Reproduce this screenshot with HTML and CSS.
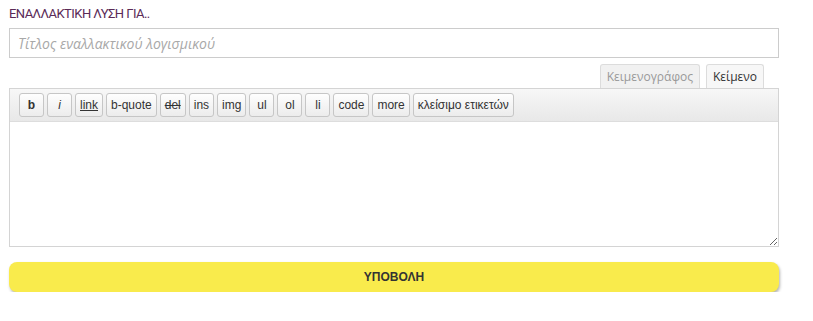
FILE: index.html
```html
<!DOCTYPE html>
<html lang="el">
<head>
    <meta charset="UTF-8">
    <title>Εναλλακτική λύση</title>
    <link rel="stylesheet" href="styles.css">
</head>
<body>

<div class="wrap">
    <h2 class="title">ΕΝΑΛΛΑΚΤΙΚΗ ΛΥΣΗ ΓΙΑ..</h2>

    <input class="name-input" type="text" placeholder="Τίτλος εναλλακτικού λογισμικού">

    <div class="tabs">
        <div class="tab">Κειμενογράφος</div>
        <div class="tab active">Κείμενο</div>
    </div>

    <div class="editor">
        <div class="toolbar">
            <button class="tb-btn"><b>b</b></button>
            <button class="tb-btn"><i>i</i></button>
            <button class="tb-btn"><u>link</u></button>
            <button class="tb-btn">b-quote</button>
            <button class="tb-btn"><s>del</s></button>
            <button class="tb-btn">ins</button>
            <button class="tb-btn">img</button>
            <button class="tb-btn">ul</button>
            <button class="tb-btn">ol</button>
            <button class="tb-btn">li</button>
            <button class="tb-btn">code</button>
            <button class="tb-btn">more</button>
            <button class="tb-btn">κλείσιμο ετικετών</button>
        </div>
        <textarea class="content"></textarea>
    </div>

    <button class="submit">ΥΠΟΒΟΛΗ</button>
</div>

</body>
</html>
```

FILE: styles.css
```css
body {
    margin: 0;
    background: #ffffff;
    font-family: 'Open Sans', 'Liberation Sans', sans-serif;
}

.wrap {
    width: 770px;
    padding: 6px 0 0 9px;
}

.title {
    margin: 0 0 6px;
    font-family: Roboto, 'Open Sans', sans-serif;
    font-size: 13px;
    font-weight: normal;
    letter-spacing: -0.55px;
    color: #5a2a57;
    line-height: 16px;
}

.name-input {
    display: block;
    width: 770px;
    height: 30px;
    box-sizing: border-box;
    border: 1px solid #cccccc;
    padding: 0 8px;
    font-family: 'Open Sans', sans-serif;
    font-size: 14px;
    font-style: italic;
    color: #333;
    outline: none;
}

.name-input::placeholder {
    color: #a8a8a8;
}

.tabs {
    display: flex;
    justify-content: flex-end;
    gap: 6px;
    margin: 6px 15px 0 0;
}

.tab {
    height: 24px;
    box-sizing: border-box;
    padding: 0 6px;
    border: 1px solid #dcdcdc;
    border-bottom: none;
    border-radius: 3px 3px 0 0;
    background: #f1f1f1;
    color: #999999;
    font-size: 12px;
    line-height: 24px;
}

.tab.active {
    background: #f7f7f7;
    color: #333333;
}

.editor {
    border: 1px solid #d4d4d4;
}

.toolbar {
    display: flex;
    gap: 3px;
    padding: 4px 9px;
    background: linear-gradient(#f7f7f7, #e8e8e8);
    border-bottom: 1px solid #dddddd;
}

.tb-btn {
    height: 24px;
    min-width: 25px;
    padding: 0 4px;
    border: 1px solid #c6c6c6;
    border-radius: 3px;
    background: linear-gradient(#fefefe, #ececec);
    font-family: 'Liberation Sans', Arial, sans-serif;
    font-size: 12px;
    color: #333333;
}

.content {
    display: block;
    width: 100%;
    height: 124px;
    box-sizing: border-box;
    border: none;
    margin: 0;
    outline: none;
    resize: vertical;
}

.submit {
    display: block;
    width: 770px;
    height: 30px;
    margin-top: 15px;
    border: none;
    border-radius: 8px;
    background: #f9eb4c;
    box-shadow: 1px 2px 3px rgba(0, 0, 0, 0.3);
    font-family: 'Liberation Sans', Arial, sans-serif;
    font-size: 12px;
    font-weight: bold;
    color: #333333;
}
```
